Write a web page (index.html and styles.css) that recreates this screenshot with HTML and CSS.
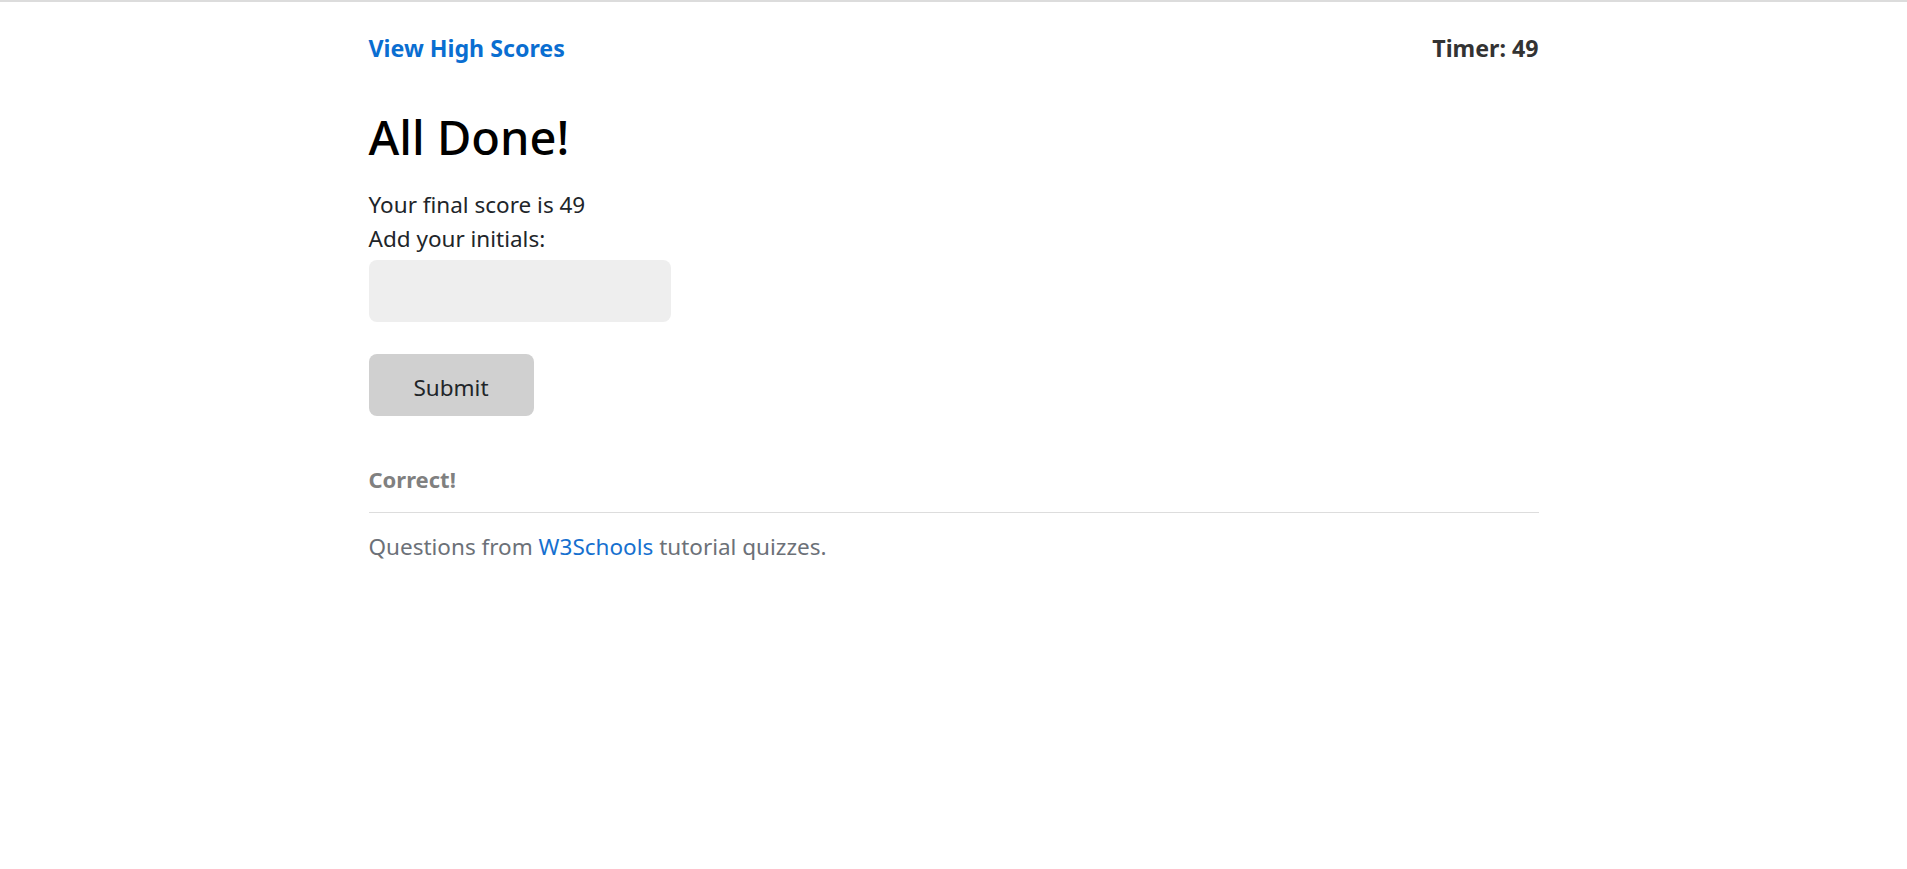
FILE: index.html
```html
<!DOCTYPE html>
<html lang="en">
<head>
<meta charset="utf-8">
<title>Code Quiz</title>
<link rel="stylesheet" href="styles.css">
</head>
<body>
<div class="container">
  <header class="topbar">
    <a class="scores-link" href="#">View High Scores</a>
    <span class="timer">Timer: 49</span>
  </header>
  <main>
    <h1 class="title">All Done!</h1>
    <p class="line">Your final score is 49</p>
    <label class="line" for="initials">Add your initials:</label>
    <input class="initials" id="initials" type="text">
    <button class="submit" type="button">Submit</button>
    <p class="feedback">Correct!</p>
    <hr class="divider">
    <p class="credit">Questions from <a class="credit-link" href="#">W3Schools</a> tutorial quizzes.</p>
  </main>
</div>
</body>
</html>
```
FILE: styles.css
```css
html, body {
  margin: 0;
  padding: 0;
  background: #ffffff;
}
body {
  border-top: 2px solid #dcdcdc;
  font-family: "Noto Sans", "Open Sans", sans-serif;
  font-size: 22.5px;
  line-height: 34px;
  color: #212529;
}
.container {
  width: 1170px;
  margin: 0 auto;
}
.topbar {
  display: flex;
  justify-content: space-between;
  align-items: center;
  padding-top: 30px;
  line-height: 32px;
  font-size: 23.2px;
  font-weight: 700;
}
.scores-link {
  color: #0a6ed1;
  text-decoration: none;
}
.timer {
  color: #333333;
}
main {
  display: flex;
  flex-direction: column;
  align-items: flex-start;
}
.title {
  font-size: 47px;
  line-height: 56px;
  font-weight: 500;
  color: #000;
  margin: 45px 0 0 0;
}
.line {
  margin: 0;
  display: block;
}
.title + .line {
  margin-top: 23px;
}
.initials {
  margin-top: 4px;
  width: 302px;
  height: 62px;
  box-sizing: border-box;
  border: none;
  border-radius: 8px;
  background: #eeeeee;
  font: inherit;
  padding: 0 14px;
}
.submit {
  margin-top: 32px;
  width: 165px;
  height: 62px;
  padding: 4px 0 0 0;
  border: none;
  border-radius: 8px;
  background: #d0d0d0;
  color: #212529;
  font-family: inherit;
  font-size: 22.5px;
}
.feedback {
  margin: 46px 0 0 0;
  font-size: 22px;
  font-weight: 700;
  color: #808080;
}
.divider {
  align-self: stretch;
  margin: 16px 0 0 0;
  border: none;
  border-top: 1px solid #dddddd;
}
.credit {
  margin: 17px 0 0 0;
  color: #6c7178;
}
.credit-link {
  color: #1670cf;
  text-decoration: none;
}
```
